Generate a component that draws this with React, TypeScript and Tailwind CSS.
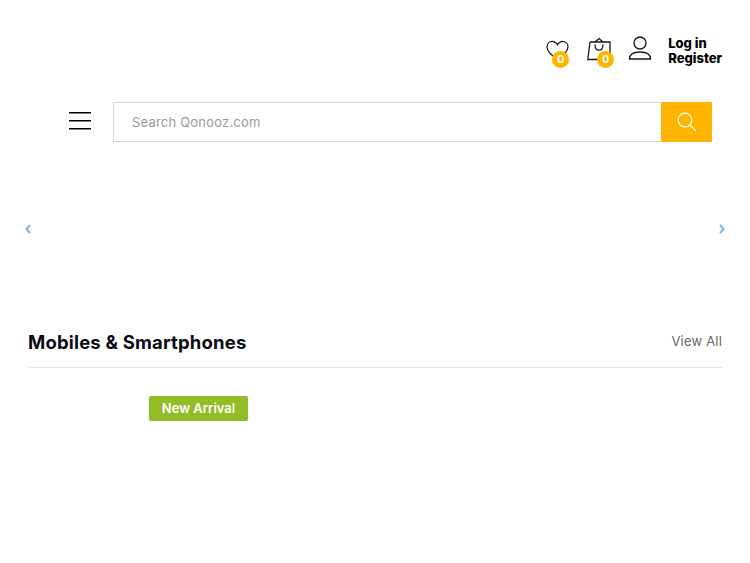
export default function App() {
  return (
    <div className="w-[750px] h-[563px] bg-white overflow-hidden font-['Inter','Liberation_Sans',sans-serif]">
      <header className="pt-[36px] pr-[28px] flex justify-end items-start h-[102px]">
        <div className="relative w-[26px] h-[32px] mr-[15px] mt-[3px]">
          <svg width="23" height="21" viewBox="0 0 24 22" fill="none" stroke="#111827" strokeWidth="1.3" className="absolute left-0 top-[1px]">
            <path d="M12 20.500C6 16.500 1 12.500 1 7.200 1 3.800 3.500 1.500 6.400 1.500c2.300 0 4.300 1.300 5.600 3.500 1.300-2.200 3.300-3.500 5.600-3.500C20.500 1.500 23 3.800 23 7.200c0 5.300-5 9.300-11 13.300z" />
          </svg>
          <span className="absolute left-[6px] top-[12px] w-[17px] h-[17px] rounded-full bg-[#ffb400] text-white text-[11px] leading-[17px] font-bold text-center">0</span>
        </div>
        <div className="relative w-[26px] h-[32px] mr-[15px] mt-[3px]">
          <svg width="24" height="24" viewBox="0 0 24 24" fill="none" stroke="#111827" strokeWidth="1.3" className="absolute left-0 -top-[2px]">
            <path d="M3 5h20l0 12M17 22.500H0.800L3 5" />
            <path d="M8 5l4-3.500 4 3.500" />
            <path d="M8 7.500c0 7.500 8 7.500 8 0" />
          </svg>
          <span className="absolute left-[10px] top-[12px] w-[17px] h-[17px] rounded-full bg-[#ffb400] text-white text-[11px] leading-[17px] font-bold text-center">0</span>
        </div>
        <svg width="24" height="24" viewBox="0 0 24 24" fill="none" stroke="#111827" strokeWidth="1.3" className="mr-[16px]">
          <circle cx="12" cy="7" r="6" />
          <path d="M1.500 23c0-5 4.500-7 10.500-7s10.500 2 10.500 7z" />
        </svg>
        <div className="text-[13px] leading-[15px] font-extrabold text-black">
          <div>Log in</div>
          <div>Register</div>
        </div>
      </header>

      <div className="flex items-center pl-[69px] pr-[38px]">
        <svg width="22" height="18" viewBox="0 0 22 18" fill="none" stroke="#000000" strokeWidth="1.4" className="mr-[22px] -mt-[2px]">
          <path d="M0 0.700h22M0 8.700h22M0 16.700h22" />
        </svg>
        <div className="flex-1 h-[40px] flex">
          <div className="flex-1 border border-[#d4d4d4] border-r-0 pl-[18px] pt-[2px] flex items-center text-[13px] tracking-[0.2px] text-[#9a9a9a]">Search Qonooz.com</div>
          <div className="w-[51px] bg-[#ffb400] flex items-center justify-center">
            <svg width="20" height="20" viewBox="0 0 20 20" fill="none" stroke="#ffffff" strokeWidth="1.2">
              <circle cx="8" cy="8" r="6.800" />
              <path d="M13 13l6 6" />
            </svg>
          </div>
        </div>
      </div>

      <div className="h-[180px] pb-[6px] pl-[25px] pr-[25px] flex items-center justify-between text-[#8db4d8]">
        <svg width="6" height="10" viewBox="0 0 6 10" fill="none" stroke="currentColor" strokeWidth="2.2"><path d="M5 1L1.500 5 5 9" /></svg>
        <svg width="6" height="10" viewBox="0 0 6 10" fill="none" stroke="currentColor" strokeWidth="2.2"><path d="M1 1l3.500 4L1 9" /></svg>
      </div>

      <div className="mx-[28px] h-[46px] pt-[9px] border-b border-[#e2e2e2] flex items-start justify-between">
        <div className="text-[18.500px] leading-[22px] tracking-[0.18px] font-bold text-[#0a0a14] whitespace-nowrap">Mobiles &amp; Smartphones</div>
        <div className="text-[13px] leading-[20px] tracking-[0.2px] text-[#666666]">View All</div>
      </div>

      <div className="mt-[28px] ml-[149px] w-[99px] h-[25px] rounded-[2px] bg-[#93bd26] text-white text-[13px] font-semibold leading-[25px] text-center">New Arrival</div>
    </div>
  );
}
